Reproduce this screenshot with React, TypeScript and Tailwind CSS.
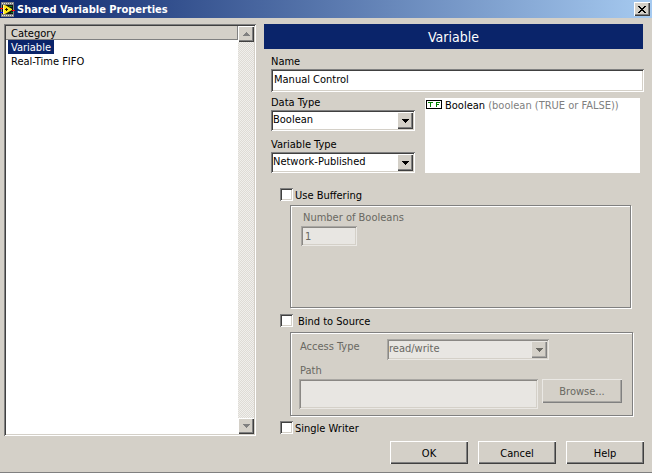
import React, { useState } from "react";

const sunken =
  "shadow-[inset_1px_1px_0_#808080,inset_-1px_-1px_0_#ffffff,inset_2px_2px_0_#404040,inset_-2px_-2px_0_#d4d0c8]";
const sunkenDim =
  "shadow-[inset_1px_1px_0_#a9a7a3,inset_-1px_-1px_0_#eae8e4,inset_2px_2px_0_#8a8884,inset_-2px_-2px_0_#d4d0c8]";
const raised =
  "bg-[#d4d0c8] shadow-[inset_1px_1px_0_#ffffff,inset_-1px_-1px_0_#404040,inset_-2px_-2px_0_#808080]";
const raisedDim =
  "bg-[#d4d0c8] shadow-[inset_1px_1px_0_#eae8e4,inset_-1px_-1px_0_#808080,inset_-2px_-2px_0_#a9a7a3]";
const etched =
  "border border-[#808080] shadow-[1px_1px_0_#ffffff,inset_1px_1px_0_#ffffff]";

function AppIcon() {
  return (
    <svg width="15" height="15" viewBox="0 0 15 15" className="shrink-0" aria-hidden="true">
      <rect x="1" width="13" height="15" fill="#808080" />
      <path d="M2 1.5h12M2 13.5h12" stroke="#e0e0e0" strokeDasharray="1 1" />
      <rect x="2" y="3" width="11" height="9" fill="#101810" />
      <path d="M9 4.5h3M11 10.5h2" stroke="#0a7a20" />
      <path d="M0 6.5h3" stroke="#ff0000" />
      <path d="M0 10.5h3" stroke="#0000ff" />
      <path d="M3 3v9h2l7-4V7L5 3z" fill="#ffe81a" />
      <path d="M3.5 3v9" stroke="#fff8a0" />
      <path d="M5 7.5h3M6.5 6v3" stroke="#202000" />
      <path d="M12 8.5h3" stroke="#ff0000" />
    </svg>
  );
}

function Arrow({ up, color }: { up?: boolean; color: string }) {
  return (
    <svg width="7" height="4" viewBox="0 0 7 4" shapeRendering="crispEdges" fill={color} aria-hidden="true">
      {up ? <path d="M3 0h1v1h1v1h1v1h1v1H0V3h1V2h1V1h1z" /> : <path d="M0 0h7v1H6v1H5v1H4v1H3V3H2V2H1V1H0z" />}
    </svg>
  );
}

function Combo({ id, options, disabled }: { id: string; options: string[]; disabled?: boolean }) {
  return (
    <div className="relative w-full">
      <select
        id={id}
        disabled={disabled}
        className={`block h-[21px] w-full appearance-none pr-5 pb-[2px] pl-[2px] opacity-100 outline-none ${
          disabled ? `bg-[#e8e6e2] text-[#696862] ${sunkenDim}` : `bg-white text-black ${sunken}`
        }`}
      >
        {options.map((o) => (
          <option key={o}>{o}</option>
        ))}
      </select>
      <span
        className={`pointer-events-none absolute top-[2px] right-[2px] flex h-[17px] w-4 items-center justify-center ${
          disabled ? raisedDim : raised
        }`}
      >
        <Arrow color={disabled ? "#696862" : "#000000"} />
      </span>
    </div>
  );
}

function Check({ id, label, wide }: { id: string; label: string; wide?: boolean }) {
  return (
    <div className={`flex h-[14px] items-start pl-[9px] ${wide ? "gap-[5px]" : "gap-[2px]"}`}>
      <input
        id={id}
        type="checkbox"
        className={`size-[13px] appearance-none bg-white checked:bg-[#0a246a] ${sunken}`}
      />
      <label htmlFor={id} className="leading-4">{label}</label>
    </div>
  );
}

export default function App() {
  const [selected, setSelected] = useState("Variable");
  const [name, setName] = useState("Manual Control");
  return (
    <div className="flex min-h-screen flex-col border-b border-[#808080] bg-[#d4d0c8] font-['DejaVu_Sans_Condensed','DejaVu_Sans',sans-serif] text-[11px] leading-4 text-black">
      <header className="flex h-[18px] items-center bg-linear-to-r/srgb from-[#0a246a] to-[#a6caf0] pr-[2px]">
        <AppIcon />
        <h1 className="ml-[2px] flex-1 pt-[2px] font-bold leading-4 text-white">Shared Variable Properties</h1>
        <button aria-label="Close" className={`flex h-[14px] w-4 items-center justify-center ${raised}`}>
          <svg width="8" height="7" viewBox="0 0 8 7" shapeRendering="crispEdges" aria-hidden="true">
            <path d="M0 0h2v1h1v1h2V1h1V0h2v1H7v1H6v1H5v1h1v1h1v1h1v1H6V6H5V5H3v1H2v1H0V6h1V5h1V4h1V3H2V2H1V1H0z" />
          </svg>
        </button>
      </header>

      <main className="flex flex-1 gap-2 pt-[6px] pr-2 pl-1">
        <nav className={`flex w-[252px] shrink-0 bg-white p-[2px] ${sunken}`}>
          <div className="flex-1">
            <h2 className="h-[14px] border-r border-b border-[#808080] bg-[#d4d0c8] pl-[5px] leading-4">
              Category
            </h2>
            {["Variable", "Real-Time FIFO"].map((item) => (
              <button
                key={item}
                onClick={() => setSelected(item)}
                className={`ml-[2px] block h-[14px] px-[3px] pt-[2px] leading-3 ${
                  selected === item ? "bg-[#0a246a] text-white" : ""
                }`}
              >
                {item}
              </button>
            ))}
          </div>
          <div className="flex w-4 flex-col justify-between bg-[repeating-conic-gradient(#dedbd5_0_25%,#f0efec_0_50%)] bg-size-[2px_2px]">
            <button aria-label="Scroll up" className={`flex h-4 w-full items-center justify-center ${raised}`}>
              <Arrow up color="#808080" />
            </button>
            <button aria-label="Scroll down" className={`flex h-4 w-full items-center justify-center ${raised}`}>
              <Arrow color="#808080" />
            </button>
          </div>
        </nav>

        <section className="min-w-0 flex-1">
          <h2 className="mr-px flex h-[25px] items-center justify-center bg-[#0a246a] text-[14px] text-white">
            Variable
          </h2>
          <div className="pt-[5px] pl-[7px]">
            <label htmlFor="name" className="block h-[15px]">Name</label>
            <input
              id="name"
              value={name}
              onChange={(e) => setName(e.target.value)}
              className={`block h-[23px] w-full bg-white px-[3px] pb-[2px] outline-none ${sunken}`}
            />
            <div className="flex gap-[10px] pt-[3px]">
              <div className="w-36 shrink-0">
                <label htmlFor="data-type" className="block h-[15px]">Data Type</label>
                <Combo id="data-type" options={["Boolean", "Double", "Int32", "String"]} />
                <label htmlFor="variable-type" className="mt-[6px] block h-[15px]">Variable Type</label>
                <Combo id="variable-type" options={["Network-Published", "Single-process"]} />
              </div>
              <div className="mt-[3px] mr-1 flex flex-1 items-start bg-white">
                <svg width="16" height="9" viewBox="0 0 16 9" shapeRendering="crispEdges" className="mt-[2px] ml-px" aria-hidden="true">
                  <path d="M.5.5h15v8H.5z" fill="#ffffff" stroke="#000000" />
                  <path d="M2 2.5h5M4.5 2v5M10.5 2v5M10 2.5h4M10 4.5h3" stroke="#008000" fill="none" />
                </svg>
                <p className="ml-[3px] whitespace-nowrap">
                  Boolean <span className="text-[#808080]">(boolean (TRUE or FALSE))</span>
                </p>
              </div>
            </div>

            <div className="pt-[15px]">
              <Check id="buffering" label="Use Buffering" />
            </div>
            <div className={`mt-[3px] mr-[13px] ml-[19px] h-[103px] pt-1 pl-[10px] text-[#696862] ${etched}`}>
              <label htmlFor="count" className="ml-[2px] block h-4">Number of Booleans</label>
              <input
                id="count"
                disabled
                defaultValue="1"
                className={`block h-5 w-14 bg-[#e8e6e2] px-1 ${sunkenDim}`}
              />
            </div>

            <div className="pt-[6px]">
              <Check id="bind" label="Bind to Source" wide />
            </div>
            <div className={`mt-1 mr-[11px] ml-[19px] h-[84px] pt-[6px] pr-[10px] pl-2 text-[#696862] ${etched}`}>
              <div className="flex items-start">
                <label htmlFor="access" className="w-[88px] shrink-0 pl-px">Access Type</label>
                <div className="w-[162px]">
                  <Combo id="access" disabled options={["read/write", "read only", "write only"]} />
                </div>
              </div>
              <label htmlFor="path" className="mt-[3px] block h-4 pl-px">Path</label>
              <div className="flex items-start gap-1">
                <input id="path" disabled className={`h-[30px] min-w-0 flex-1 bg-[#e8e6e2] px-1 ${sunkenDim}`} />
                <button disabled className={`h-6 w-20 pt-[2px] ${raisedDim}`}>Browse...</button>
              </div>
            </div>

            <div className="pt-[5px]">
              <Check id="single" label="Single Writer" />
            </div>
          </div>
        </section>
      </main>

      <footer className="flex justify-end gap-[10px] pt-[5px] pr-2 pb-2">
        {["OK", "Cancel", "Help"].map((b) => (
          <button key={b} className={`h-[23px] w-[78px] pt-[2px] ${raised}`}>
            {b}
          </button>
        ))}
      </footer>
    </div>
  );
}
